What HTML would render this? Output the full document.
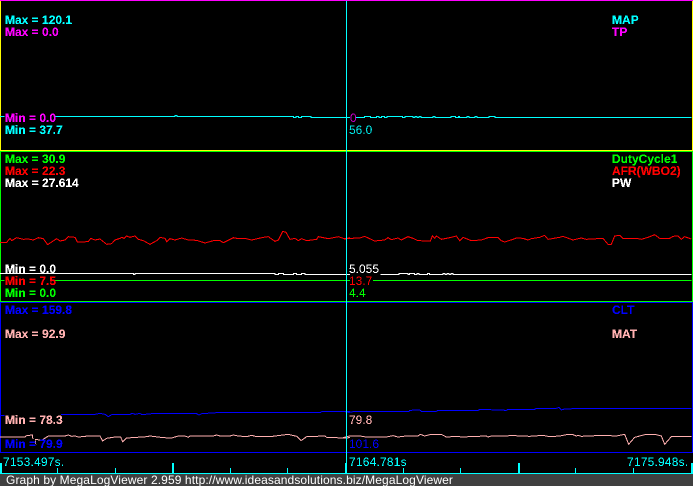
<!DOCTYPE html>
<html>
<head>
<meta charset="utf-8">
<style>
html,body{margin:0;padding:0;background:#000;width:693px;height:486px;overflow:hidden}
svg{display:block}
text{font-family:"Liberation Sans",sans-serif;font-size:12px}
.b{font-weight:bold}
.t polyline{fill:none;stroke-width:3;shape-rendering:crispEdges}
</style>
</head>
<body>
<svg width="693" height="486" viewBox="0 0 693 486" xmlns="http://www.w3.org/2000/svg">
<defs>
<filter id="al" x="0" y="0" width="100%" height="100%" color-interpolation-filters="sRGB">
<feComponentTransfer><feFuncA type="discrete" tableValues="0 1 1"/></feComponentTransfer>
</filter>
<filter id="th" x="0" y="0" width="100%" height="100%" color-interpolation-filters="sRGB">
<feComponentTransfer><feFuncA type="discrete" tableValues="0 0 1 1"/></feComponentTransfer>
</filter>
</defs>
<rect width="693" height="486" fill="#000"/>

<g shape-rendering="crispEdges">
<rect x="0" y="0" width="693" height="1" fill="#ff00ff"/>
<rect x="0" y="1" width="1" height="149" fill="#ffff00"/>
<rect x="692" y="1" width="1" height="149" fill="#ffff00"/>
<rect x="0" y="150" width="693" height="1" fill="#ffff00"/>
<rect x="0" y="151" width="693" height="1" fill="#00ff00"/>
<rect x="0" y="152" width="1" height="149" fill="#00ff00"/>
<rect x="692" y="152" width="1" height="149" fill="#00ff00"/>
<rect x="0" y="301" width="693" height="1" fill="#00ff00"/>
<rect x="0" y="302" width="693" height="1" fill="#0000ff"/>
<rect x="0" y="303" width="1" height="149" fill="#0000ff"/>
<rect x="692" y="303" width="1" height="149" fill="#0000ff"/>
<rect x="0" y="452" width="693" height="1" fill="#0000ff"/>
</g>

<!-- Panel 1 traces -->
<g class="t" transform="scale(0.33333)" stroke="#00ffff">
<polyline points="0,349 14,349"/>
<polyline points="162,349 525,349 525,347 531,347 531,349 880,349 880,352 888,352 888,349 896,349 896,352 904,352 904,349 910,349 933,349 933,352 1050,352"/>
</g>
<g class="t" transform="translate(343,0) scale(0.33333)" stroke="#00ffff">
<polyline points="0,352 18,352"/>
<polyline points="38,352 65,352 65,349 82,349 82,352 100,352 100,349 108,349 108,352 116,352 116,349 124,349 124,352 132,352 132,349 178,349 178,352 186,352 186,349 210,349 210,352 216,352 216,349 222,349 222,352 228,352 228,349 234,349 234,352 270,352 270,349 276,349 276,352 324,352 324,349 338,349 338,352 346,352 346,349 350,349 350,352 372,352 372,349 378,349 378,352 396,352 396,349 402,349 402,352 438,352 438,349 456,349 456,352 1045,352"/>
</g>

<!-- Panel 2 traces -->
<g class="t" transform="translate(0,150) scale(0.33333)">
<polyline stroke="#ff0000" points="0,277 20,277 30,265 35,272 50,263 70,268 85,267 100,270 115,263 130,266 143,284 155,276 170,266 180,273 195,270 205,260 225,262 232,276 265,275 272,265 285,270 300,267 320,283 335,281 345,270 360,265 365,262 372,265 380,258 390,262 405,258 415,268 430,272 450,283 470,272 480,262 495,265 500,275 510,266 525,270 545,264 565,270 590,271 615,279 640,272 660,272 670,278 700,263 715,266 735,265 755,270 790,262 805,260 825,274 835,270 848,244 858,247 870,268 885,265 895,272 905,266 920,272 950,268 955,260 985,266 1015,260 1035,267 1050,263"/>
<polyline stroke="#ffffff" points="0,370 400,370 400,373 405,373 405,370 825,370 825,373 835,373 835,370 850,370 850,373 880,373 880,370 890,370 890,373 904,373 904,370 915,370 915,373 1050,373"/>
<polyline stroke="#00ff00" points="0,391 14,391"/>
<polyline stroke="#00ff00" points="162,391 1050,391"/>
</g>
<g class="t" transform="translate(343,150) scale(0.33333)">
<polyline stroke="#ff0000" points="0,266 50,264 65,259 80,266 95,273 125,270 135,263 145,269 165,264 175,270 195,260 210,265 225,272 262,273 268,258 275,265 280,258 295,268 320,263 340,258 350,272 360,262 385,272 415,270 435,263 465,263 475,272 485,276 510,268 520,264 540,265 555,270 565,266 590,262 605,256 615,268 650,262 660,259 690,270 715,264 730,268 780,265 795,283 805,283 815,258 830,256 840,265 880,265 895,268 915,262 935,254 950,265 980,265 990,259 1005,258 1015,268 1025,260 1045,267"/>
<polyline stroke="#ffffff" points="0,373 18,373"/>
<polyline stroke="#ffffff" points="112,373 168,373 168,370 195,370 195,373 200,373 200,371 215,371 215,373 222,373 222,371 228,371 228,373 254,373 254,370 260,370 260,373 300,373 300,370 306,370 306,373 312,373 312,370 318,370 318,373 324,373 324,370 330,370 330,373 1045,373"/>
<polyline stroke="#00ff00" points="0,391 18,391"/>
<polyline stroke="#00ff00" points="90,391 1045,391"/>
</g>

<!-- Panel 3 traces -->
<g class="t" transform="translate(0,300) scale(0.33333)">
<polyline stroke="#0000ff" points="0,346 14,346"/>
<polyline stroke="#0000ff" points="183,344 285,343 300,340 315,343 325,350 335,344 390,343 397,340 405,343 420,340 425,344 455,341 590,341 597,345 605,341 650,338 960,338 965,335 1050,335"/>
<polyline stroke="#ffb0b0" points="0,411 75,411 80,407 97,405 100,425 107,430 105,418 125,421 145,408 195,408 205,405 215,409 225,408 235,411 265,408 300,408 308,423 320,415 345,411 362,411 368,425 380,414 440,410 450,408 490,413 515,414 535,408 555,408 565,412 570,408 640,408 650,405 660,408 690,408 700,405 715,408 740,410 755,406 770,410 810,410 865,403 890,409 903,422 920,410 975,408 980,412 1030,414 1050,413"/>
</g>
<g class="t" transform="translate(343,300) scale(0.33333)">
<polyline stroke="#0000ff" points="0,334 18,337 30,335 198,334 200,331 230,330 235,334 280,334 285,331 405,331 412,328 490,331 495,328 575,328 580,325 610,325 640,325 648,322 655,330 665,327 720,325 735,325 755,326 1045,325"/>
<polyline stroke="#ffb0b0" points="0,413 20,408 50,408 70,411 130,411 150,407 165,411 190,408 225,408 232,403 245,408 265,403 295,403 310,411 345,409 355,411 430,408 435,411 445,408 515,407 560,409 600,406 620,410 650,408 670,404 690,404 700,408 705,406 715,409 780,406 820,408 845,403 857,433 875,412 905,404 940,404 955,408 965,433 985,410 1045,409"/>
</g>

<!-- Black gap under the low blue label -->
<rect x="5" y="439" width="30" height="10" fill="#000"/>

<!-- Axis and cursor -->
<g shape-rendering="crispEdges" fill="#00ffff">
<rect x="346" y="1" width="1" height="472"/>
<rect x="0" y="473" width="693" height="1"/>
<rect x="0" y="463" width="2" height="10"/>
<rect x="57" y="468" width="1" height="5"/>
<rect x="115" y="468" width="1" height="5"/>
<rect x="172" y="463" width="2" height="10"/>
<rect x="230" y="468" width="1" height="5"/>
<rect x="287" y="468" width="1" height="5"/>
<rect x="345" y="463" width="2" height="10"/>
<rect x="403" y="468" width="1" height="5"/>
<rect x="460" y="468" width="1" height="5"/>
<rect x="518" y="463" width="2" height="10"/>
<rect x="575" y="468" width="1" height="5"/>
<rect x="633" y="468" width="1" height="5"/>
<rect x="691" y="463" width="2" height="10"/>
</g>

<!-- Aliased bold labels -->
<g filter="url(#al)">
<text class="b" x="5" y="24" fill="#00ffff">Max = 120.1</text>
<text class="b" x="5" y="36" fill="#ff00ff">Max = 0.0</text>
<text class="b" x="612" y="24" fill="#00ffff">MAP</text>
<text class="b" x="612" y="36" fill="#ff00ff">TP</text>
<text class="b" x="5" y="122" fill="#ff00ff">Min = 0.0</text>
<text class="b" x="5" y="134" fill="#00ffff">Min = 37.7</text>

<text class="b" x="5" y="163" fill="#00ff00">Max = 30.9</text>
<text class="b" x="5" y="175" fill="#ff0000">Max = 22.3</text>
<text class="b" x="5" y="187" fill="#ffffff">Max = 27.614</text>
<text class="b" x="612" y="163" fill="#00ff00">DutyCycle1</text>
<text class="b" x="612" y="175" fill="#ff0000">AFR(WBO2)</text>
<text class="b" x="612" y="187" fill="#ffffff">PW</text>
<text class="b" x="5" y="273" fill="#ffffff">Min = 0.0</text>
<text class="b" x="5" y="285" fill="#ff0000">Min = 7.5</text>
<text class="b" x="5" y="297" fill="#00ff00">Min = 0.0</text>

<text class="b" x="5" y="314" fill="#0000ff">Max = 159.8</text>
<text class="b" x="5" y="338" fill="#ffb0b0">Max = 92.9</text>
<text class="b" x="612" y="314" fill="#0000ff">CLT</text>
<text class="b" x="612" y="338" fill="#ffb0b0">MAT</text>
<text class="b" x="5" y="424" fill="#ffb0b0">Min = 78.3</text>
<text class="b" x="5" y="448" fill="#0000ff">Min = 79.9</text>
</g>

<!-- Thin value labels -->
<g filter="url(#th)">
<text x="350" y="122" fill="#c000c0">0</text>
<text x="349" y="134" fill="#00e0e0">56.0</text>
<text x="349" y="273" fill="#ffffff">5.055</text>
<text x="349" y="285" fill="#ff0000">13.7</text>
<text x="349" y="297" fill="#00ff00">4.4</text>
<text x="349" y="424" fill="#ffb0b0">79.8</text>
<text x="349" y="448" fill="#0000ff">101.6</text>
<text x="3" y="466" fill="#00ffff" letter-spacing="0.2">7153.497s.</text>
<text x="349" y="466" fill="#00ffff" letter-spacing="0.2">7164.781s</text>
<text x="627" y="466" fill="#00ffff" letter-spacing="0.2">7175.948s.</text>
</g>

<!-- Footer -->
<rect x="0" y="474" width="693" height="12" fill="#404040" shape-rendering="crispEdges"/>
<text x="6" y="484" fill="#ffffff" letter-spacing="0.105">Graph by MegaLogViewer 2.959 http://www.ideasandsolutions.biz/MegaLogViewer</text>
</svg>
</body>
</html>
